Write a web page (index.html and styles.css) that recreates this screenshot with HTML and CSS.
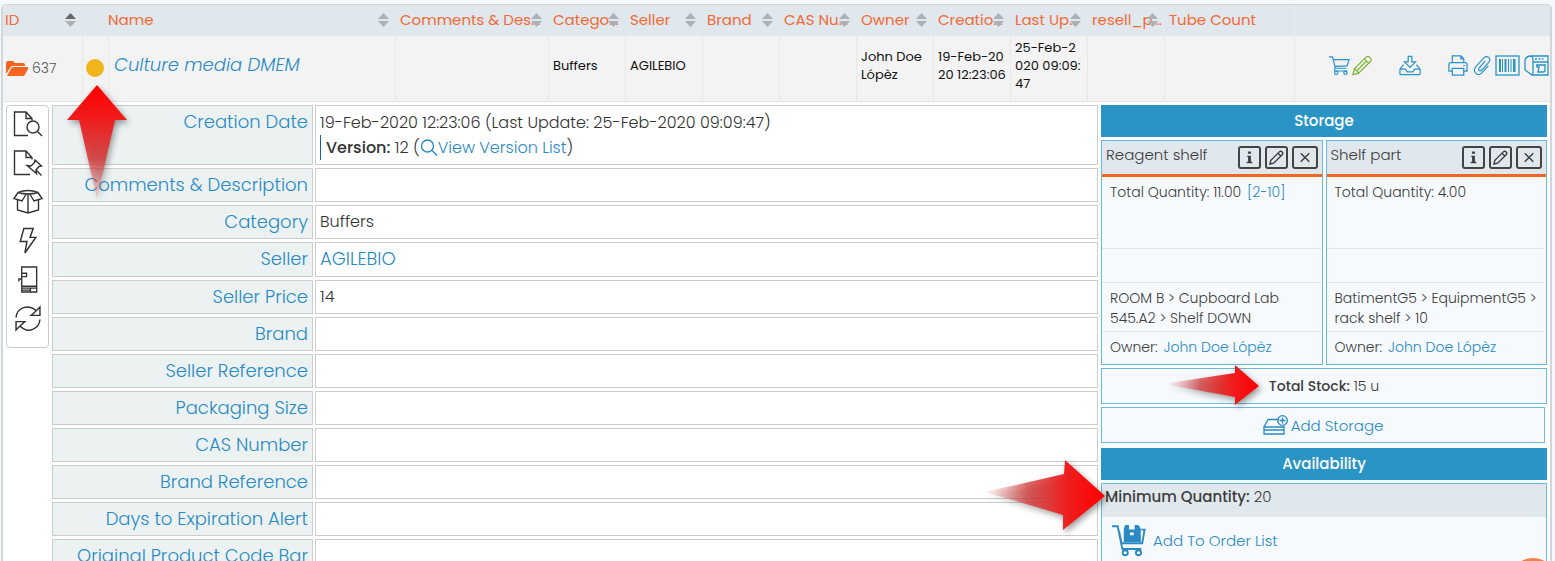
FILE: index.html
```
<!DOCTYPE html>
<html lang="en">
<head>
  <title>Reagents</title>
  <meta charset="UTF-8">
  <link rel="stylesheet" href="styles.css">
</head>
<body>
  <!-- ICONS -->
  <svg class="sprite" aria-hidden="true">
    <symbol id="i-sort" viewBox="0 0 11 14"><path d="M0 6 5.500 0 11 6z" class="up"/><path d="M0 8h11l-5.500 6z" class="down"/></symbol>
    <symbol id="i-folder" viewBox="0 0 23 16"><path d="M0 13V2q0-2 2-2h5l2 2h8q2 0 2 2v1H7Q5 5 4 7z"/><path d="M1 15 5 7.500Q6 6 7.500 6H21q2 0 1 2l-3 5.500q-1 1.500-2.500 1.500z"/></symbol>
    <symbol id="i-cart" viewBox="0 0 24 22"><path d="M1 1.500h4L8 14h12M5.600 4.500H23L21 11.500 7.500 12M8 14q-2 3 0 3h13"/><circle cx="9" cy="19" r="1.800"/><circle cx="19" cy="19" r="1.800"/></symbol>
    <symbol id="i-pencil" viewBox="0 0 22 22"><path d="M1.500 20.500 3 14.500 15.500 2q1.500-1.300 3 0L20 3.500q1.300 1.500 0 3L7.500 19zM3 14.500q3 1 4.500 4.500M13.500 4l4.500 4.500M15.500 6.500 5.500 16.500"/></symbol>
    <symbol id="i-edit" viewBox="0 0 16 16"><path d="M1 15l1-4L11 2q1.500-1.500 3 0t0 3L5 14zM9.500 3.500l3 3"/></symbol>
    <symbol id="i-inbox" viewBox="0 0 24 22"><path d="M10 1h4v6h4l-6 6-6-6h4zM5 10l-4 5v5q0 1 1 1h20q1 0 1-1v-5l-4-5M1 15h6l2 3h6l2-3h6"/></symbol>
    <symbol id="i-print" viewBox="0 0 22 22"><path d="M5 8V1h9l3 3v4M14 1v3h3M5 17H1.500V10q0-2 2-2h15q2 0 2 2v7H17M5 14h12v7H5zM16.500 11h2"/></symbol>
    <symbol id="i-clip" viewBox="0 0 20 22"><path d="M13.500 6 7 13.500q-1.500 2 0 3t3-.500l7.500-8.500q2.500-3.500 0-5.500t-5.500.500L3 12.500q-3 4 0 7t6.500 0L17 11.500"/></symbol>
    <symbol id="i-barcode" viewBox="0 0 25 21"><rect x="1" y="1" width="23" height="19"/><path class="bars" d="M4 4h2v13H4zM7 4h1v13H7zM9.500 4h2v13h-2zM13 4h1v13h-1zM15.500 4h1v13h-1zM18 4h2.500v13H18z"/></symbol>
    <symbol id="i-labeler" viewBox="0 0 25 21"><path d="M7 1q-5 0-6 4v10l7 5h16V1zM7 1q2 1 2 4v15M9 7h15M11 4h2M14.500 4h2M18 4h1.500M12 10h10M13 10v2h2l-1 5h5q2 0 2-2v-5"/></symbol>
    <symbol id="i-doc-search" viewBox="0 0 30 26"><path d="M15 25H1.500V1.500H13L19 8v2M13 1.500V8h6"/><circle cx="20" cy="16.500" r="6"/><path d="M24.500 21 29 25.500"/></symbol>
    <symbol id="i-doc-pin" viewBox="0 0 30 26"><path d="M17 25H1.500V1.500H13L19 8v2M13 1.500V8h6M22 10.500l6.500 6-2.500.500-3 3.500.500 3.500L14 16l4 .500 3.500-3.500zM22.500 20l6 6"/></symbol>
    <symbol id="i-box" viewBox="0 0 30 25"><path d="M5 3.500Q15-.500 25 3.500M5 3.500q10 3 20 0M5 3.500 1 9.500 9 12l4.500-7.500M25 3.500l4 6L21 12l-4.500-7.500M4.500 11v10L15 24l10.500-3V11M15 5v19"/></symbol>
    <symbol id="i-bolt" viewBox="0 0 18 26"><path d="M5 1.500h9L11 10h5.500L6 25 8 14H1.500z"/></symbol>
    <symbol id="i-fridge" viewBox="0 0 22 28"><path d="M4.500 1H20v26H4.500zM4.500 7.500h5v3.500h-5M4.500 13.500H1.500V16M4.500 21H20M4.500 23H20M13.500 23v4M4.500 25h9"/></symbol>
    <symbol id="i-sync" viewBox="0 0 26 26"><path d="M1.500 12Q2 5 8.500 2.500q7-2 12.500 3M21 5.500 24.500 2v8H16zM24.500 14q-.500 7-7 9.500t-12-3M5 20.500 1.500 24v-8H10z"/></symbol>
    <symbol id="i-search" viewBox="0 0 18 17"><circle cx="7.500" cy="7" r="6"/><path d="M12 11.500 17 16.500"/></symbol>
    <symbol id="i-info" viewBox="0 0 16 16"><path d="M6.500 1.500h3v2.500h-3zM5.500 6h4v6.500H11V14H5v-1.500h1.500V7.500h-1z"/></symbol>
    <symbol id="i-x" viewBox="0 0 16 16"><path d="M3.500 3.500l9 9M12.500 3.500l-9 9"/></symbol>
    <symbol id="i-drive" viewBox="0 0 25 20"><path d="M16 4.500H5L1 12h19q1 0 1-1M1 12v3h20v-4M1 15v4h20v-4"/><circle cx="19.500" cy="5.500" r="4.800"/><path d="M19.500 2.500v6M16.500 5.500h6"/></symbol>
    <symbol id="i-order" viewBox="0 0 36 34"><path class="box" d="M14 1h4v5h6V1h4l2.500 4v14h-18V5zM19 9v3h4V9z"/><path d="M0 2.500h6l5 24h20M7.500 8l2.500 12.500h22L34.500 6H31"/><circle cx="14" cy="30.500" r="2.700"/><circle cx="28" cy="30.500" r="2.700"/></symbol>
  </svg>

  <div class="card">
    <!-- LIST ROW -->
    <table class="list">
      <colgroup>
        <col class="c-id"><col class="c-status"><col><col class="c-comments">
        <col class="c-std"><col class="c-std"><col class="c-std"><col class="c-std">
        <col class="c-std"><col class="c-std"><col class="c-std"><col class="c-std">
        <col class="c-tube"><col class="c-actions">
      </colgroup>
      <thead>
        <tr>
          <th><span>ID</span><button class="sort asc" aria-label="Sort by ID"><svg><use href="#i-sort"/></svg></button></th>
          <th></th>
          <th class="name-head"><span>Name</span><button class="sort" aria-label="Sort by Name"><svg><use href="#i-sort"/></svg></button></th>
          <th><span>Comments &amp; Des...</span><button class="sort" aria-label="Sort by Comments"><svg><use href="#i-sort"/></svg></button></th>
          <th><span>Catego...</span><button class="sort" aria-label="Sort by Category"><svg><use href="#i-sort"/></svg></button></th>
          <th><span>Seller</span><button class="sort" aria-label="Sort by Seller"><svg><use href="#i-sort"/></svg></button></th>
          <th><span>Brand</span><button class="sort" aria-label="Sort by Brand"><svg><use href="#i-sort"/></svg></button></th>
          <th><span>CAS Nu...</span><button class="sort" aria-label="Sort by CAS Number"><svg><use href="#i-sort"/></svg></button></th>
          <th><span>Owner</span><button class="sort" aria-label="Sort by Owner"><svg><use href="#i-sort"/></svg></button></th>
          <th><span>Creatio...</span><button class="sort" aria-label="Sort by Creation Date"><svg><use href="#i-sort"/></svg></button></th>
          <th><span>Last Up...</span><button class="sort" aria-label="Sort by Last Update"><svg><use href="#i-sort"/></svg></button></th>
          <th><span>resell_p...</span><button class="sort" aria-label="Sort by resell_p"><svg><use href="#i-sort"/></svg></button></th>
          <th><span>Tube Count</span></th>
          <th class="actions-head"></th>
        </tr>
      </thead>
      <tbody>
        <tr>
          <td class="id-cell"><svg class="folder"><use href="#i-folder"/></svg><span>637</span></td>
          <td class="status-cell"><i class="dot"></i></td>
          <td class="name-cell"><a href="#">Culture media DMEM</a></td>
          <td></td>
          <td>Buffers</td>
          <td>AGILEBIO</td>
          <td></td>
          <td></td>
          <td>John Doe<br>Lópèz</td>
          <td>19-Feb-20<br>20 12:23:06</td>
          <td>25-Feb-2<br>020 09:09:<br>47</td>
          <td></td>
          <td></td>
          <td class="actions-cell">
            <div class="actions">
              <div class="action-group tight">
                <button aria-label="Add to cart"><svg><use href="#i-cart"/></svg></button>
                <button class="green" aria-label="Edit"><svg><use href="#i-pencil"/></svg></button>
              </div>
              <button aria-label="Download"><svg><use href="#i-inbox"/></svg></button>
              <div class="action-group">
                <button aria-label="Print"><svg><use href="#i-print"/></svg></button>
                <button class="narrow" aria-label="Attachments"><svg><use href="#i-clip"/></svg></button>
                <button class="wide" aria-label="Barcode"><svg><use href="#i-barcode"/></svg></button>
                <button class="wide" aria-label="Print label"><svg><use href="#i-labeler"/></svg></button>
              </div>
            </div>
          </td>
        </tr>
      </tbody>
    </table>

    <!-- DETAILS -->
    <div class="details">
      <nav class="tools">
        <button aria-label="View record"><svg><use href="#i-doc-search"/></svg></button>
        <button aria-label="Pin record"><svg><use href="#i-doc-pin"/></svg></button>
        <button aria-label="Stock"><svg><use href="#i-box"/></svg></button>
        <button aria-label="Quick actions"><svg><use href="#i-bolt"/></svg></button>
        <button aria-label="Equipment"><svg><use href="#i-fridge"/></svg></button>
        <button aria-label="Refresh"><svg><use href="#i-sync"/></svg></button>
      </nav>

      <table class="fields">
        <tr>
          <th>Creation Date</th>
          <td>
            <div class="date">19-Feb-2020 12:23:06 (Last Update: 25-Feb-2020 09:09:47)</div>
            <div class="version"><b>Version:</b> 12 (<a href="#"><svg><use href="#i-search"/></svg>View Version List</a>)</div>
          </td>
        </tr>
        <tr><th>Comments &amp; Description</th><td></td></tr>
        <tr><th>Category</th><td>Buffers</td></tr>
        <tr><th>Seller</th><td><a class="seller" href="#">AGILEBIO</a></td></tr>
        <tr><th>Seller Price</th><td>14</td></tr>
        <tr><th>Brand</th><td></td></tr>
        <tr><th>Seller Reference</th><td></td></tr>
        <tr><th>Packaging Size</th><td></td></tr>
        <tr><th>CAS Number</th><td></td></tr>
        <tr><th>Brand Reference</th><td></td></tr>
        <tr><th>Days to Expiration Alert</th><td></td></tr>
        <tr><th>Original Product Code Bar</th><td></td></tr>
      </table>

      <aside class="side">
        <h2>Storage</h2>
        <div class="shelves">
          <section class="shelf">
            <header>
              <h3>Reagent shelf</h3>
              <button class="solid" aria-label="Info"><svg><use href="#i-info"/></svg></button>
              <button aria-label="Edit"><svg><use href="#i-edit"/></svg></button>
              <button class="close" aria-label="Remove"><svg><use href="#i-x"/></svg></button>
            </header>
            <div class="quantity">Total Quantity: 11.00 <a href="#">[2-10]</a></div>
            <div class="blank"></div>
            <div class="place">ROOM B &gt; Cupboard Lab<br>545.A2 &gt; Shelf DOWN</div>
            <div class="owner">Owner: <a href="#">John Doe Lópèz</a></div>
          </section>
          <section class="shelf">
            <header>
              <h3>Shelf part</h3>
              <button class="solid" aria-label="Info"><svg><use href="#i-info"/></svg></button>
              <button aria-label="Edit"><svg><use href="#i-edit"/></svg></button>
              <button class="close" aria-label="Remove"><svg><use href="#i-x"/></svg></button>
            </header>
            <div class="quantity">Total Quantity: 4.00</div>
            <div class="blank"></div>
            <div class="place">BatimentG5 &gt; EquipmentG5 &gt;<br>rack shelf &gt; 10</div>
            <div class="owner">Owner: <a href="#">John Doe Lópèz</a></div>
          </section>
        </div>
        <div class="total"><b>Total Stock:</b> 15 u</div>
        <button class="add-storage"><svg><use href="#i-drive"/></svg>Add Storage</button>
        <h2>Availability</h2>
        <div class="availability">
          <div class="minimum"><b>Minimum Quantity:</b> 20</div>
          <a class="order" href="#"><svg><use href="#i-order"/></svg>Add To Order List</a>
        </div>
      </aside>
    </div>
  </div>

  <button class="help" aria-label="Help"></button>

  <!-- POINTER ARROWS -->
  <svg class="arrow arrow-status" viewBox="0 0 60 114">
    <defs><linearGradient id="g1" x1="0" y1="0" x2="0" y2="1"><stop offset="0" stop-color="#f00"/><stop offset=".3" stop-color="#f01c1c"/><stop offset=".65" stop-color="#d83a3a" stop-opacity=".85"/><stop offset="1" stop-color="#e88" stop-opacity=".2"/></linearGradient></defs>
    <path fill="url(#g1)" d="M30 0 60 35H48L30 114 12 35H0z"/>
  </svg>
  <svg class="arrow arrow-stock" viewBox="0 0 90 40">
    <defs><linearGradient id="g2" x1="1" y1="0" x2="0" y2="0"><stop offset="0" stop-color="#f00"/><stop offset=".3" stop-color="#f01c1c"/><stop offset=".65" stop-color="#d83a3a" stop-opacity=".75"/><stop offset="1" stop-color="#e88" stop-opacity=".1"/></linearGradient></defs>
    <path fill="url(#g2)" d="M90 21 66 0v8L0 18v2l66 12v8z"/>
  </svg>
  <svg class="arrow arrow-minimum" viewBox="0 0 120 70">
    <path fill="url(#g2)" d="M120 36 80 0 79 14 0 32 78 55v15z"/>
  </svg>
</body>
</html>
```
FILE: styles.css
```
* { box-sizing: border-box; }
html { overflow: hidden; }
body {
  margin: 0;
  padding: 4px 3px 0 1px;
  height: 100vh;
  overflow: hidden;
  background: #f4f8fb;
  color: #333;
  font-family: Poppins, Inter, "Liberation Sans", sans-serif;
  font-size: 16px;
  font-weight: 300;
}
a { color: #2a8ac4; text-decoration: none; }
b { font-weight: 500; }
h2, h3 { margin: 0; }
button {
  padding: 0;
  border: 0;
  background: none;
  color: inherit;
  font: inherit;
  cursor: pointer;
}
svg { display: block; fill: none; stroke: currentColor; }
.sprite { position: absolute; width: 0; height: 0; }
.card {
  border: 2px solid #d3d6d9;
  border-top-width: 1px;
  border-radius: 5px;
  background: #fff;
}

/* list row */
.list { width: 100%; table-layout: fixed; border-collapse: separate; border-spacing: 0; }
.c-id { width: 79px; }
.c-status { width: 26px; }
.c-comments { width: 153px; }
.c-std { width: 77px; }
.c-tube { width: 130px; }
.c-actions { width: 256px; }
.list th {
  position: relative;
  height: 31px;
  padding: 0 0 2px 5px;
  background: #e0e7ed;
  border-bottom: 1px solid #e6e9ec;
  color: #f26a34;
  font-size: 15px;
  font-weight: 400;
  text-align: left;
  white-space: nowrap;
}
.list th:first-child { padding-left: 2px; }
.list .name-head { padding-left: 0; }
.sort { position: absolute; right: 6px; top: 8px; color: #acb1b5; }
.sort svg { width: 11px; height: 14px; fill: currentColor; stroke: none; }
.up { fill: var(--up, currentColor); }
.asc { --up: #666; }
.list td {
  height: 66px;
  padding: 0 0 6px 4px;
  background: #f3f3f3;
  border-left: 1px solid #e8e8e8;
  border-bottom: 1px solid #e4e4e4;
  color: #111;
  font-size: 13px;
  font-weight: 400;
  line-height: 18px;
  white-space: nowrap;
}
.list .actions-head { border-left: 1px solid #e8ecef; }
.list .id-cell { padding: 0 0 0 3px; border-left: 0; color: #555; font-weight: 300; }
.id-cell svg { display: inline-block; width: 23px; height: 16px; margin-right: 3px; fill: #f26522; stroke: none; vertical-align: middle; }
.id-cell span { font-size: 14px; vertical-align: middle; }
.dot { display: block; width: 18px; height: 18px; border-radius: 50%; background: #f1b51c; }
.list .status-cell { padding: 0 0 2px 3px; }
.list .name-cell { padding: 0 0 8px 5px; font-size: 18px; font-style: italic; font-weight: 300; }
.actions { display: flex; justify-content: flex-end; align-items: center; gap: 26px; padding-right: 1px; color: #2a93c8; }
.action-group { display: flex; align-items: center; gap: 4px; }
.tight { gap: 1px; }
.actions svg { width: 22px; height: 21px; stroke-width: 1.3; }
.actions .narrow svg { width: 18px; }
.actions .wide svg { width: 25px; }
.bars { fill: currentColor; stroke: none; }
.green { color: #7fb536; }

/* details */
.details { display: flex; align-items: flex-start; gap: 3px; padding: 3px 3px 3px 3px; }
.tools {
  display: flex;
  flex-direction: column;
  align-items: center;
  gap: 12px;
  width: 43px;
  height: 243px;
  padding-top: 4px;
  border: 1px solid #ccc;
  border-radius: 4px;
  color: #333;
}
.tools svg { width: 30px; height: 27px; stroke-width: 1.4; }

.fields { flex: 1; border-spacing: 2px 3px; margin: -3px -2px; }
.fields th, .fields td { height: 34px; padding: 4px; border: 1px solid #ccc; line-height: 24px; vertical-align: top; }
.fields th { width: 261px; background: #ecf2f2; color: #2a8ac4; font-size: 18px; font-weight: 300; text-align: right; white-space: nowrap; }
.date { line-height: 25px; }
.version { padding-left: 5px; border-left: 1px solid #0a6ba0; line-height: 25px; }
.version svg { display: inline-block; width: 18px; height: 17px; stroke-width: 1.4; vertical-align: -3px; }
.seller { font-size: 18px; }

/* right column */
.side { display: flex; flex-direction: column; gap: 3px; width: 446px; color: #3c3c3c; }
.side h2 { background: #2a95c5; color: #fff; font-size: 15px; font-weight: 500; line-height: 32px; text-align: center; }
.shelves { display: flex; gap: 3px; }
.shelf { flex: 1; border: 1px solid #6bbbe0; background: #f6fafd; font-size: 14px; line-height: 20px; }
.shelf header {
  display: flex;
  align-items: center;
  gap: 4px;
  height: 36px;
  padding: 0 4px;
  border-bottom: 3px solid #f26522;
  background: #e0e7ed;
}
.shelf h3 { flex: 1; padding-bottom: 5px; font-size: 15px; font-weight: 300; }
.shelf header button { width: 23px; height: 23px; padding: 2px; border: 2px solid #444; border-radius: 3px; }
.shelf header .close { width: 26px; padding: 2px 3px; }
.shelf header svg { width: 100%; height: 100%; stroke-width: 1.5; }
.shelf .solid svg { fill: currentColor; stroke: none; }
.quantity, .blank, .place { margin-right: 1px; border-bottom: 1px solid #dfe6ec; }
.quantity, .place, .owner { padding-left: 8px; white-space: nowrap; }
.quantity { height: 72px; padding-top: 5px; }
.quantity a, .owner a { margin-left: 2px; }
.blank { height: 34px; }
.place { padding-top: 5px; padding-bottom: 3px; }
.owner { height: 32px; padding-top: 5px; }
.total, .add-storage { height: 36px; border: 1px solid #6bbbe0; background: #f6fafd; }
.total { font-size: 14px; line-height: 34px; text-align: center; }
.add-storage { display: flex; justify-content: center; align-items: center; gap: 3px; margin: 0 2px 2px 0; color: #2a8ac4; font-size: 15px; }
.add-storage svg { width: 25px; height: 20px; stroke-width: 1.3; }
.availability { height: 100px; border: 1px solid #6bbbe0; background: #f6fafd; }
.minimum { height: 33px; padding-left: 3px; background: #e0e7ed; font-size: 15px; line-height: 26px; }
.order { display: flex; align-items: center; gap: 7px; padding: 6px 10px; font-size: 15px; }
.order svg { width: 34px; height: 34px; stroke-width: 2; }
.box { fill: currentColor; fill-rule: evenodd; stroke: none; }

/* floating */
.help { position: fixed; right: -3px; bottom: -47px; width: 50px; height: 50px; border-radius: 50%; background: #f77f45; }
.arrow { position: absolute; stroke: none; filter: drop-shadow(2px 3px 3px rgba(0, 0, 0, .4)); }
.arrow-status { left: 67px; top: 85px; width: 60px; height: 114px; }
.arrow-stock { left: 1169px; top: 365px; width: 90px; height: 40px; }
.arrow-minimum { left: 985px; top: 460px; width: 120px; height: 70px; }
```
